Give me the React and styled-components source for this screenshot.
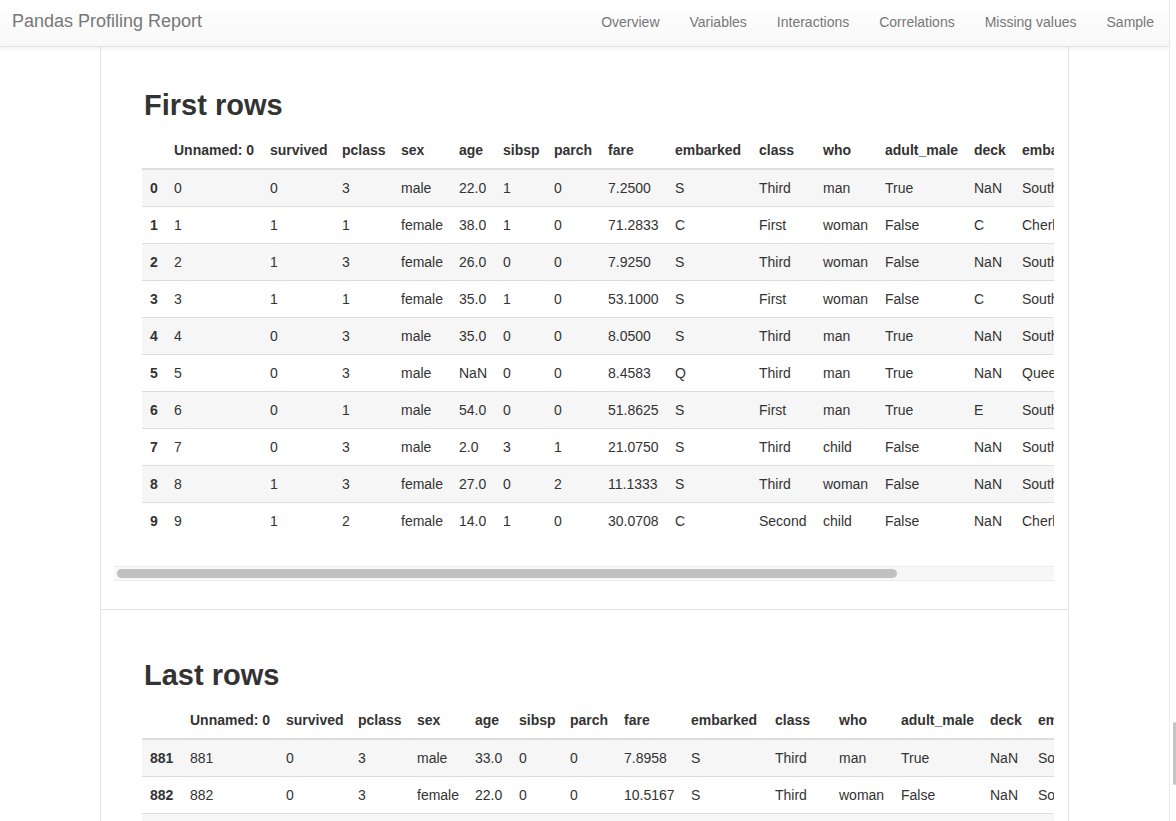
import React from 'react';
import styled, { createGlobalStyle } from 'styled-components';

const GlobalStyle = createGlobalStyle`
  html, body { margin: 0; padding: 0; height: 100%; overflow: hidden; background: #fff; }
  body {
    font-family: "Liberation Sans", Arial, Helvetica, sans-serif;
    font-size: 14px;
    line-height: 20px;
    color: #333;
  }
  #root { height: 100%; }
`;

const Shell = styled.div`
  display: flex;
  height: 100vh;
`;

const Viewport = styled.div`
  flex: 1;
  min-width: 0;
  display: flex;
  flex-direction: column;
  overflow: hidden;
`;

const Navbar = styled.nav`
  flex: none;
  height: 47px;
  box-sizing: border-box;
  display: flex;
  align-items: baseline;
  justify-content: space-between;
  padding: 11px 0 0 12px;
  background-image: linear-gradient(to bottom, #ffffff 0, #f8f8f8 100%);
  border-bottom: 1px solid #e2e2e2;
  box-shadow: 0 1px 5px rgba(0, 0, 0, 0.075);
  position: relative;
  z-index: 1;
`;

const Brand = styled.a`
  font-size: 18px;
  line-height: 20px;
  color: #777;
  text-decoration: none;
`;

const NavList = styled.ul`
  display: flex;
  align-items: baseline;
  list-style: none;
  margin: 0;
  padding: 0;
`;

const NavLink = styled.a`
  display: block;
  padding: 0 15px;
  font-size: 14px;
  line-height: 20px;
  color: #777;
  text-decoration: none;
`;

const Main = styled.main`
  flex: 1 0 auto;
  box-sizing: border-box;
  width: 969px;
  margin: 0 auto;
  border-left: 1px solid #e3e3e8;
  border-right: 1px solid #e3e3e8;
`;

const Section = styled.section`
  padding: ${(p) => (p.$first ? '22px' : '29px')} 14px 28px 13px;
  border-top: ${(p) => (p.$first ? 'none' : '1px solid #e0e0e6')};
`;

const Heading = styled.h2`
  margin: 20px 0 10px 30px;
  font-size: 29px;
  line-height: 33px;
  font-weight: bold;
  color: #333;
`;

const ScrollArea = styled.div`
  overflow: hidden;
`;

const Table = styled.table`
  border-collapse: collapse;
  table-layout: fixed;
  width: ${(p) => p.$width}px;
  margin: 0 0 27px 28px;
  font-size: 14px;
  line-height: 20px;
  white-space: nowrap;
`;

const Col = styled.col`
  width: ${(p) => p.$w}px;
`;

const HeadCell = styled.th`
  padding: 8px;
  text-align: left;
  font-weight: bold;
  vertical-align: bottom;
  border-bottom: 2px solid #ddd;
  overflow: hidden;
`;

const Row = styled.tr`
  background: ${(p) => (p.$striped ? '#f6f6f6' : '#ffffff')};
`;

const IndexCell = styled.th`
  padding: 8px;
  text-align: left;
  font-weight: bold;
  border-top: 1px solid #ddd;
  overflow: hidden;
`;

const Cell = styled.td`
  padding: 8px;
  text-align: left;
  border-top: 1px solid #ddd;
  overflow: hidden;
`;

const Track = styled.div`
  height: 15px;
  box-sizing: border-box;
  padding: 2px 3px;
  background: #f7f7f7;
  border-top: 1px solid #ececec;
  border-bottom: 1px solid #ececec;
`;

const Thumb = styled.div`
  height: 9px;
  border-radius: 5px;
  background: #c1c1c1;
`;

const PageScrollbar = styled.div`
  flex: none;
  width: 7px;
  box-sizing: border-box;
  border-left: 1px solid #ebebeb;
  background: #fff;
  overflow: hidden;
`;

const PageThumb = styled.div`
  width: 3px;
  margin-left: 3px;
  border-radius: 2px;
  background: #c4c4c4;
`;

const columns = [
  'Unnamed: 0', 'survived', 'pclass', 'sex', 'age', 'sibsp', 'parch', 'fare',
  'embarked', 'class', 'who', 'adult_male', 'deck', 'embark_town', 'alive', 'alone',
];
const colWidths = [96, 72, 59, 58, 44, 51, 54, 67, 84, 64, 62, 89, 48, 110, 55, 60];

const firstRows = [
  ['0', '0', '0', '3', 'male', '22.0', '1', '0', '7.2500', 'S', 'Third', 'man', 'True', 'NaN', 'Southampton', 'no', 'False'],
  ['1', '1', '1', '1', 'female', '38.0', '1', '0', '71.2833', 'C', 'First', 'woman', 'False', 'C', 'Cherbourg', 'yes', 'False'],
  ['2', '2', '1', '3', 'female', '26.0', '0', '0', '7.9250', 'S', 'Third', 'woman', 'False', 'NaN', 'Southampton', 'yes', 'True'],
  ['3', '3', '1', '1', 'female', '35.0', '1', '0', '53.1000', 'S', 'First', 'woman', 'False', 'C', 'Southampton', 'yes', 'False'],
  ['4', '4', '0', '3', 'male', '35.0', '0', '0', '8.0500', 'S', 'Third', 'man', 'True', 'NaN', 'Southampton', 'no', 'True'],
  ['5', '5', '0', '3', 'male', 'NaN', '0', '0', '8.4583', 'Q', 'Third', 'man', 'True', 'NaN', 'Queenstown', 'no', 'True'],
  ['6', '6', '0', '1', 'male', '54.0', '0', '0', '51.8625', 'S', 'First', 'man', 'True', 'E', 'Southampton', 'no', 'True'],
  ['7', '7', '0', '3', 'male', '2.0', '3', '1', '21.0750', 'S', 'Third', 'child', 'False', 'NaN', 'Southampton', 'no', 'False'],
  ['8', '8', '1', '3', 'female', '27.0', '0', '2', '11.1333', 'S', 'Third', 'woman', 'False', 'NaN', 'Southampton', 'yes', 'False'],
  ['9', '9', '1', '2', 'female', '14.0', '1', '0', '30.0708', 'C', 'Second', 'child', 'False', 'NaN', 'Cherbourg', 'yes', 'False'],
];

const lastRows = [
  ['881', '881', '0', '3', 'male', '33.0', '0', '0', '7.8958', 'S', 'Third', 'man', 'True', 'NaN', 'Southampton', 'no', 'True'],
  ['882', '882', '0', '3', 'female', '22.0', '0', '0', '10.5167', 'S', 'Third', 'woman', 'False', 'NaN', 'Southampton', 'no', 'True'],
  ['883', '883', '0', '2', 'male', '28.0', '0', '0', '10.5000', 'S', 'Second', 'man', 'True', 'NaN', 'Southampton', 'no', 'True'],
  ['884', '884', '0', '3', 'male', '25.0', '0', '0', '7.0500', 'S', 'Third', 'man', 'True', 'NaN', 'Southampton', 'no', 'True'],
  ['885', '885', '0', '3', 'female', '39.0', '0', '5', '29.1250', 'Q', 'Third', 'woman', 'False', 'NaN', 'Queenstown', 'no', 'False'],
  ['886', '886', '0', '2', 'male', '27.0', '0', '0', '13.0000', 'S', 'Second', 'man', 'True', 'NaN', 'Southampton', 'no', 'True'],
  ['887', '887', '1', '1', 'female', '19.0', '0', '0', '30.0000', 'S', 'First', 'woman', 'False', 'B', 'Southampton', 'yes', 'True'],
  ['888', '888', '0', '3', 'female', 'NaN', '1', '2', '23.4500', 'S', 'Third', 'woman', 'False', 'NaN', 'Southampton', 'no', 'False'],
  ['889', '889', '1', '1', 'male', '26.0', '0', '0', '30.0000', 'C', 'First', 'man', 'True', 'C', 'Cherbourg', 'yes', 'True'],
  ['890', '890', '0', '3', 'male', '32.0', '0', '0', '7.7500', 'Q', 'Third', 'man', 'True', 'NaN', 'Queenstown', 'no', 'True'],
];

const navItems = ['Overview', 'Variables', 'Interactions', 'Correlations', 'Missing values', 'Sample'];

const VISIBLE = 940;
const TABLE_OFFSET = 28;

function DataFrame({ title, rows, indexWidth, first }) {
  const tableWidth = indexWidth + colWidths.reduce((a, b) => a + b, 0);
  const ratio = VISIBLE / (tableWidth + TABLE_OFFSET);
  return (
    <Section $first={first}>
      <Heading>{title}</Heading>
      <ScrollArea>
        <Table $width={tableWidth}>
          <colgroup>
            <Col $w={indexWidth} />
            {colWidths.map((w, i) => (
              <Col key={i} $w={w} />
            ))}
          </colgroup>
          <thead>
            <tr>
              <HeadCell />
              {columns.map((c) => (
                <HeadCell key={c}>{c}</HeadCell>
              ))}
            </tr>
          </thead>
          <tbody>
            {rows.map((r, i) => (
              <Row key={r[0]} $striped={i % 2 === 0}>
                <IndexCell>{r[0]}</IndexCell>
                {r.slice(1).map((v, j) => (
                  <Cell key={j}>{v}</Cell>
                ))}
              </Row>
            ))}
          </tbody>
        </Table>
      </ScrollArea>
      <Track>
        <Thumb style={{ width: `${(ratio * 100).toFixed(2)}%` }} />
      </Track>
    </Section>
  );
}

export default function App() {
  const scrollTop = 722;
  const thumbHeight = 63;
  return (
    <>
      <GlobalStyle />
      <Shell>
        <Viewport>
          <Navbar>
            <Brand href="#">Pandas Profiling Report</Brand>
            <NavList>
              {navItems.map((n) => (
                <li key={n}>
                  <NavLink href="#">{n}</NavLink>
                </li>
              ))}
            </NavList>
          </Navbar>
          <Main>
            <DataFrame first title="First rows" rows={firstRows} indexWidth={24} />
            <DataFrame title="Last rows" rows={lastRows} indexWidth={40} />
          </Main>
        </Viewport>
        <PageScrollbar>
          <PageThumb style={{ marginTop: scrollTop, height: thumbHeight }} />
        </PageScrollbar>
      </Shell>
    </>
  );
}
